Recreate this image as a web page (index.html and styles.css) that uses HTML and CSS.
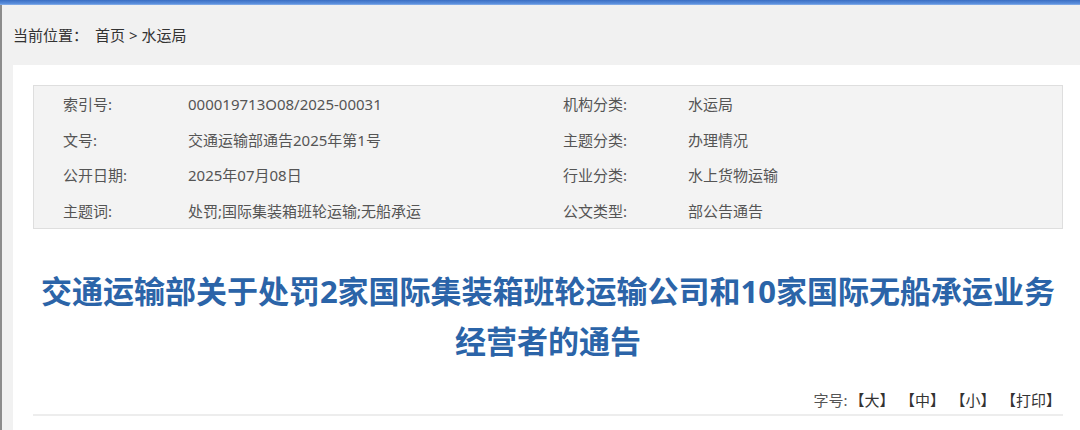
FILE: index.html
```html
<!DOCTYPE html>
<html lang="zh-CN">
<head>
<meta charset="utf-8">
<title>交通运输部关于处罚2家国际集装箱班轮运输公司和10家国际无船承运业务经营者的通告</title>
<link rel="stylesheet" href="styles.css">
</head>
<body>
<div class="topbar"></div>
<div class="page">
  <div class="crumb">当前位置：<span class="crumb-links">首页 &gt; 水运局</span></div>
  <div class="main">
    <div class="info">
      <div class="lbl">索引号:</div><div class="val">000019713O08/2025-00031</div>
      <div class="lbl">机构分类:</div><div class="val">水运局</div>
      <div class="lbl">文号:</div><div class="val">交通运输部通告2025年第1号</div>
      <div class="lbl">主题分类:</div><div class="val">办理情况</div>
      <div class="lbl">公开日期:</div><div class="val">2025年07月08日</div>
      <div class="lbl">行业分类:</div><div class="val">水上货物运输</div>
      <div class="lbl">主题词:</div><div class="val">处罚;国际集装箱班轮运输;无船承运</div>
      <div class="lbl">公文类型:</div><div class="val">部公告通告</div>
    </div>
    <h1 class="title">交通运输部关于处罚2家国际集装箱班轮运输公司和10家国际无船承运业务经营者的通告</h1>
    <div class="tools">
      <span class="tools-label">字号:</span><a class="tool">【大】</a><a class="tool">【中】</a><a class="tool">【小】</a><a class="tool">【打印】</a>
    </div>
  </div>
</div>
</body>
</html>
```
FILE: styles.css
```css
html, body {
  margin: 0;
  padding: 0;
  background: #f1f1f1;
}
body {
  font-family: "Noto Sans", "Noto Sans CJK SC", sans-serif;
  font-size: 15px;
  color: #333;
  height: 430px;
  overflow: hidden;
}
.topbar {
  height: 5px;
  background: linear-gradient(#3a6ec3, #5a8edc 70%, #8db3ea);
}
.page {
  border-left: 2px solid #8c8c8c;
  padding-left: 11px;
  background: #f1f1f1;
  min-height: 425px;
  display: flex;
  flex-direction: column;
}
.crumb {
  height: 60px;
  line-height: 60px;
  color: #333;
}
.crumb-links {
  margin-left: 7px;
}
.main {
  flex: 1;
  background: #fff;
  padding: 20px 17px 0 20px;
}
.info {
  border: 1px solid #dedede;
  background: #f3f3f3;
  display: grid;
  grid-template-columns: 125px 375px 125px 1fr;
  grid-auto-rows: 35.5px;
  align-items: center;
  padding-left: 29px;
  color: #555;
}
.title {
  margin: 37px 0 0;
  padding: 0;
  text-align: center;
  font-family: "Noto Sans", "Noto Sans CJK SC", sans-serif;
  font-size: 31px;
  font-weight: bold;
  line-height: 50px;
  color: #2b64a8;
}
.tools {
  margin-top: 22px;
  line-height: 24px;
  padding-bottom: 2px;
  text-align: right;
  padding-right: 2px;
  border-bottom: 2px solid #ededed;
  color: #333;
}
.tools-label {
  color: #555;
}
.tool {
  color: #333;
  margin-left: 13px;
  cursor: pointer;
}
.tools-label + .tool {
  margin-left: 2px;
}
```
